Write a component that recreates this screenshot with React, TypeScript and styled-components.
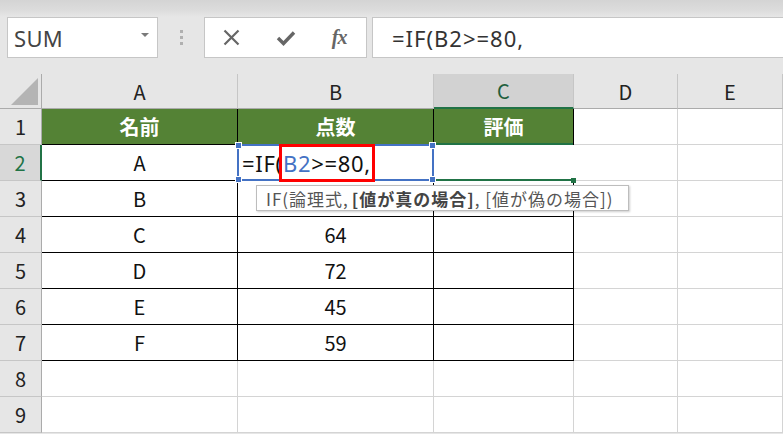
import React from "react";
import styled, { createGlobalStyle, css } from "styled-components";

const GlobalStyle = createGlobalStyle`
  html, body {
    margin: 0;
    padding: 0;
    background: #e6e6e6;
    overflow: hidden;
  }
  body {
    font-family: "Noto Sans CJK JP", "Noto Sans", sans-serif;
  }
`;

const COLS = [
  { key: "A", width: 196 },
  { key: "B", width: 196 },
  { key: "C", width: 140 },
  { key: "D", width: 104 },
  { key: "E", width: 105 },
];

type Row = { name?: string; score?: string; header?: boolean };

const ROWS: Row[] = [
  { name: "名前", score: "点数", header: true },
  { name: "A", score: "" },
  { name: "B", score: "" },
  { name: "C", score: "64" },
  { name: "D", score: "72" },
  { name: "E", score: "45" },
  { name: "F", score: "59" },
  {},
  {},
];

export default function App() {
  return (
    <>
      <GlobalStyle />
      <Page>
        <TopBand />
        <FormulaRow>
          <NameBox>
            <span>SUM</span>
            <Caret />
          </NameBox>
          <Grip>
            <i />
            <i />
            <i />
          </Grip>
          <ButtonBox>
            <Slot>
              <svg width="17" height="17" viewBox="0 0 17 17">
                <path d="M1.5 1.5 L15.5 15.5 M15.5 1.5 L1.5 15.5" stroke="#666" strokeWidth="2.2" fill="none" />
              </svg>
            </Slot>
            <Slot>
              <svg width="20" height="16" viewBox="0 0 20 16">
                <path d="M2 8 L7.5 13.5 L18 2.5" stroke="#666" strokeWidth="3.4" fill="none" />
              </svg>
            </Slot>
            <Slot>
              <Fx>fx</Fx>
            </Slot>
          </ButtonBox>
          <FormulaInput>=IF(B2&gt;=80,</FormulaInput>
        </FormulaRow>

        <Sheet>
          <Corner />
          {COLS.map((c) => (
            <ColHead key={c.key} $active={c.key === "C"}>
              {c.key}
            </ColHead>
          ))}

          {ROWS.map((r, i) => {
            const n = i + 1;
            const inTable = n <= 7;
            return (
              <React.Fragment key={n}>
                <RowHead $active={n === 2}>{n}</RowHead>
                <Cell $table={inTable} $head={r.header}>
                  {r.name}
                </Cell>
                <Cell $table={inTable} $head={r.header}>
                  {n === 2 ? (
                    <EditText>
                      =IF(<Ref>B2</Ref>&gt;=80,
                    </EditText>
                  ) : (
                    r.score
                  )}
                </Cell>
                <Cell $table={inTable} $head={r.header} $open={n === 2}>
                  {r.header ? "評価" : ""}
                </Cell>
                <Cell />
                <Cell />
              </React.Fragment>
            );
          })}

          <RangeBox>
            <Handle style={{ left: -4, top: -4 }} />
            <Handle style={{ right: -4, top: -4 }} />
            <Handle style={{ left: -4, bottom: -4 }} />
            <Handle style={{ right: -4, bottom: -4 }} />
          </RangeBox>
          <ActiveBox />
          <RedBox />
          <Tip>
            IF(論理式, <b>[値が真の場合]</b>, [値が偽の場合])
          </Tip>
        </Sheet>
      </Page>
    </>
  );
}

const Page = styled.div`
  width: 783px;
  height: 434px;
  overflow: hidden;
  background: #e6e6e6;
`;

const TopBand = styled.div`
  height: 17px;
  background: linear-gradient(#d4d4d4, #dcdcdc 60%, #e6e6e6);
`;

const FormulaRow = styled.div`
  display: flex;
  align-items: stretch;
  height: 41px;
  padding-left: 7px;
`;

const boxBase = css`
  box-sizing: border-box;
  background: #fff;
  border: 1px solid #c6c6c6;
`;

const NameBox = styled.div`
  ${boxBase};
  width: 151px;
  display: flex;
  align-items: center;
  justify-content: space-between;
  padding: 0 8px 0 6px;
  font-family: "Noto Sans", "Noto Sans CJK JP", sans-serif;
  font-size: 22px;
  letter-spacing: 0.3px;
  color: #444;
`;

const Caret = styled.span`
  width: 0;
  height: 0;
  border-left: 4px solid transparent;
  border-right: 4px solid transparent;
  border-top: 4px solid #7a7a7a;
  margin-bottom: 6px;
`;

const Grip = styled.div`
  width: 46px;
  display: flex;
  flex-direction: column;
  align-items: center;
  justify-content: center;
  gap: 3px;

  i {
    display: block;
    width: 3px;
    height: 3px;
    background: #b0b0b0;
  }
`;

const ButtonBox = styled.div`
  ${boxBase};
  width: 163px;
  display: flex;
  align-items: center;
`;

const Slot = styled.div`
  width: 54px;
  display: flex;
  align-items: center;
  justify-content: center;
`;

const Fx = styled.span`
  font-family: "Liberation Serif", "DejaVu Serif", serif;
  font-style: italic;
  font-weight: bold;
  font-size: 20px;
  color: #666;
  letter-spacing: -1px;
`;

const FormulaInput = styled.div`
  ${boxBase};
  flex: 1;
  margin-left: 5px;
  margin-right: -2px;
  display: flex;
  align-items: center;
  padding-left: 19px;
  font-size: 22px;
  letter-spacing: 1px;
  color: #333;
  font-family: "Noto Sans", "Noto Sans CJK JP", sans-serif;
`;

const Sheet = styled.div`
  position: relative;
  margin-top: 16px;
  display: grid;
  grid-template-columns: 42px ${COLS.map((c) => c.width + "px").join(" ")};
  grid-template-rows: 35px repeat(9, 36px);
  font-size: 20px;
  color: #111;
`;

const Corner = styled.div`
  box-sizing: border-box;
  border-right: 1px solid #ababab;
  border-bottom: 1px solid #ababab;
  position: relative;
  &::after {
    content: "";
    position: absolute;
    right: 3px;
    bottom: 3px;
    width: 0;
    height: 0;
    border-left: 27px solid transparent;
    border-bottom: 27px solid #b4b4b4;
  }
`;

const ColHead = styled.div<{ $active?: boolean }>`
  box-sizing: border-box;
  display: flex;
  align-items: center;
  justify-content: center;
  border-right: 1px solid #c6c6c6;
  border-bottom: ${(p) => (p.$active ? "2px solid #217346" : "1px solid #ababab")};
  background: ${(p) => (p.$active ? "#d2d2d2" : "#e6e6e6")};
  color: ${(p) => (p.$active ? "#1f5f3d" : "#222")};
`;

const RowHead = styled.div<{ $active?: boolean }>`
  box-sizing: border-box;
  display: flex;
  align-items: center;
  justify-content: center;
  border-bottom: 1px solid #c6c6c6;
  border-right: ${(p) => (p.$active ? "2px solid #217346" : "1px solid #ababab")};
  background: ${(p) => (p.$active ? "#d8d8d8" : "#e6e6e6")};
  color: ${(p) => (p.$active ? "#217346" : "#222")};
`;

const Cell = styled.div<{ $table?: boolean; $head?: boolean; $open?: boolean }>`
  box-sizing: border-box;
  display: flex;
  align-items: center;
  justify-content: center;
  white-space: nowrap;
  background: ${(p) => (p.$head ? "#548235" : "#fff")};
  color: ${(p) => (p.$head ? "#fff" : "#111")};
  font-weight: ${(p) => (p.$head ? 700 : 400)};
  border-right: 1px solid ${(p) => (p.$open ? "#fff" : p.$table ? "#000" : "#d4d4d4")};
  border-bottom: 1px solid ${(p) => (p.$table ? "#000" : "#d4d4d4")};
`;

const EditText = styled.span`
  align-self: center;
  margin-right: auto;
  padding-left: 4px;
  font-family: "Noto Sans", "Noto Sans CJK JP", sans-serif;
  font-size: 22px;
  letter-spacing: 0.7px;
  color: #111;
`;

const Ref = styled.span`
  color: #4472c4;
`;

const RangeBox = styled.div`
  position: absolute;
  left: 237px;
  top: 70px;
  width: 197px;
  height: 37px;
  box-sizing: border-box;
  border: 2px solid #4472c4;
  pointer-events: none;
`;

const Handle = styled.span`
  position: absolute;
  width: 5px;
  height: 5px;
  background: #4472c4;
  border: 1px solid #fff;
`;

const ActiveBox = styled.div`
  position: absolute;
  left: 436px;
  top: 69px;
  width: 137px;
  height: 38px;
  box-sizing: border-box;
  border-top: 2px solid #217346;
  border-bottom: 2px solid #217346;
  &::after {
    content: "";
    position: absolute;
    right: -3px;
    bottom: -4px;
    width: 5px;
    height: 5px;
    background: #217346;
  }
`;

const RedBox = styled.div`
  position: absolute;
  left: 279px;
  top: 70px;
  width: 96px;
  height: 38px;
  box-sizing: border-box;
  border: 3px solid #ff0000;
`;

const Tip = styled.div`
  position: absolute;
  left: 256px;
  top: 111px;
  width: 373px;
  height: 26px;
  box-sizing: border-box;
  background: #fff;
  border: 1px solid #bdbdbd;
  box-shadow: 1px 1px 2px rgba(0, 0, 0, 0.2);
  display: flex;
  align-items: center;
  padding-left: 9px;
  font-size: 17px;
  letter-spacing: 1px;
  color: #555;
  white-space: nowrap;

  b {
    font-weight: 700;
    color: #444;
    margin-left: 3px;
  }
`;
